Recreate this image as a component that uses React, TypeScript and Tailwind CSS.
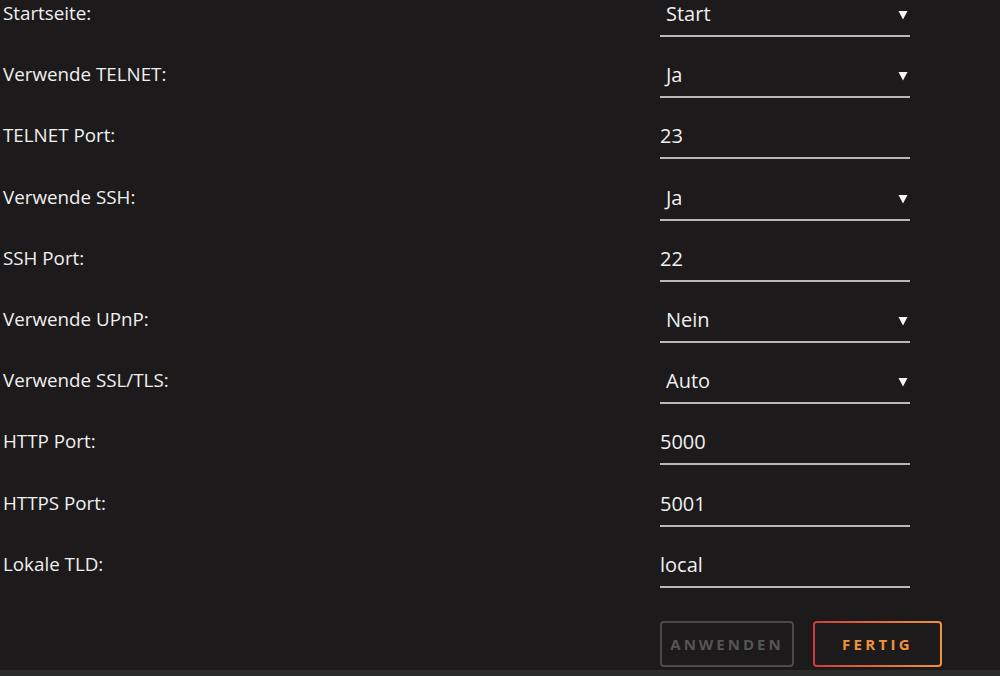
import React from 'react'

type Row = { label: string; value: string; select?: boolean }

const rows: Row[] = [
  { label: 'Startseite:', value: 'Start', select: true },
  { label: 'Verwende TELNET:', value: 'Ja', select: true },
  { label: 'TELNET Port:', value: '23' },
  { label: 'Verwende SSH:', value: 'Ja', select: true },
  { label: 'SSH Port:', value: '22' },
  { label: 'Verwende UPnP:', value: 'Nein', select: true },
  { label: 'Verwende SSL/TLS:', value: 'Auto', select: true },
  { label: 'HTTP Port:', value: '5000' },
  { label: 'HTTPS Port:', value: '5001' },
  { label: 'Lokale TLD:', value: 'local' },
]

function Field({ row }: { row: Row }) {
  return (
    <div className="h-[61.2px] flex">
      <div className="w-[660px] pl-[3px] text-[18.8px] leading-[27px] text-[#f0f0f0]">{row.label}</div>
      <div className="w-[250px] h-[37px] border-b-2 border-[#b8b8b8] flex items-start justify-between">
        <span className={'text-[20px] leading-[28px] text-[#f0f0f0] ' + (row.select ? 'pl-[6px]' : '')}>{row.value}</span>
        {row.select && (
          <svg width="10" height="10" viewBox="0 0 10 10" className="mt-[10px] mr-[2px]">
            <path d="M0.5 1 L9.5 1 L5 9.5 Z" fill="#f5f5f5" />
          </svg>
        )}
      </div>
    </div>
  )
}

export default function App() {
  return (
    <div className="h-[676px] w-[1000px] bg-[#1c1a1b] flex flex-col overflow-hidden" style={{ fontFamily: '"Open Sans", "Noto Sans", sans-serif' }}>
      <div className="flex-1">
        {rows.map((r) => (
          <Field key={r.label} row={r} />
        ))}
        <div className="flex pl-[660px] pt-[9px] gap-[19px]">
          <button className="w-[134px] h-[46px] rounded-[4px] border-2 border-[#4a4a4a] text-[15px] font-bold tracking-[0.2em] text-[#555555]">
            ANWENDEN
          </button>
          <div className="w-[129px] h-[46px] rounded-[4px] p-[2px] bg-gradient-to-r from-[#d23a3a] to-[#f0923c]">
            <button className="w-full h-full rounded-[2px] bg-[#1c1a1b] text-[15px] font-bold tracking-[0.22em] text-[#f0923c]">
              FERTIG
            </button>
          </div>
        </div>
      </div>
      <div className="h-[6px] bg-[#2b2b2b]" />
    </div>
  )
}
